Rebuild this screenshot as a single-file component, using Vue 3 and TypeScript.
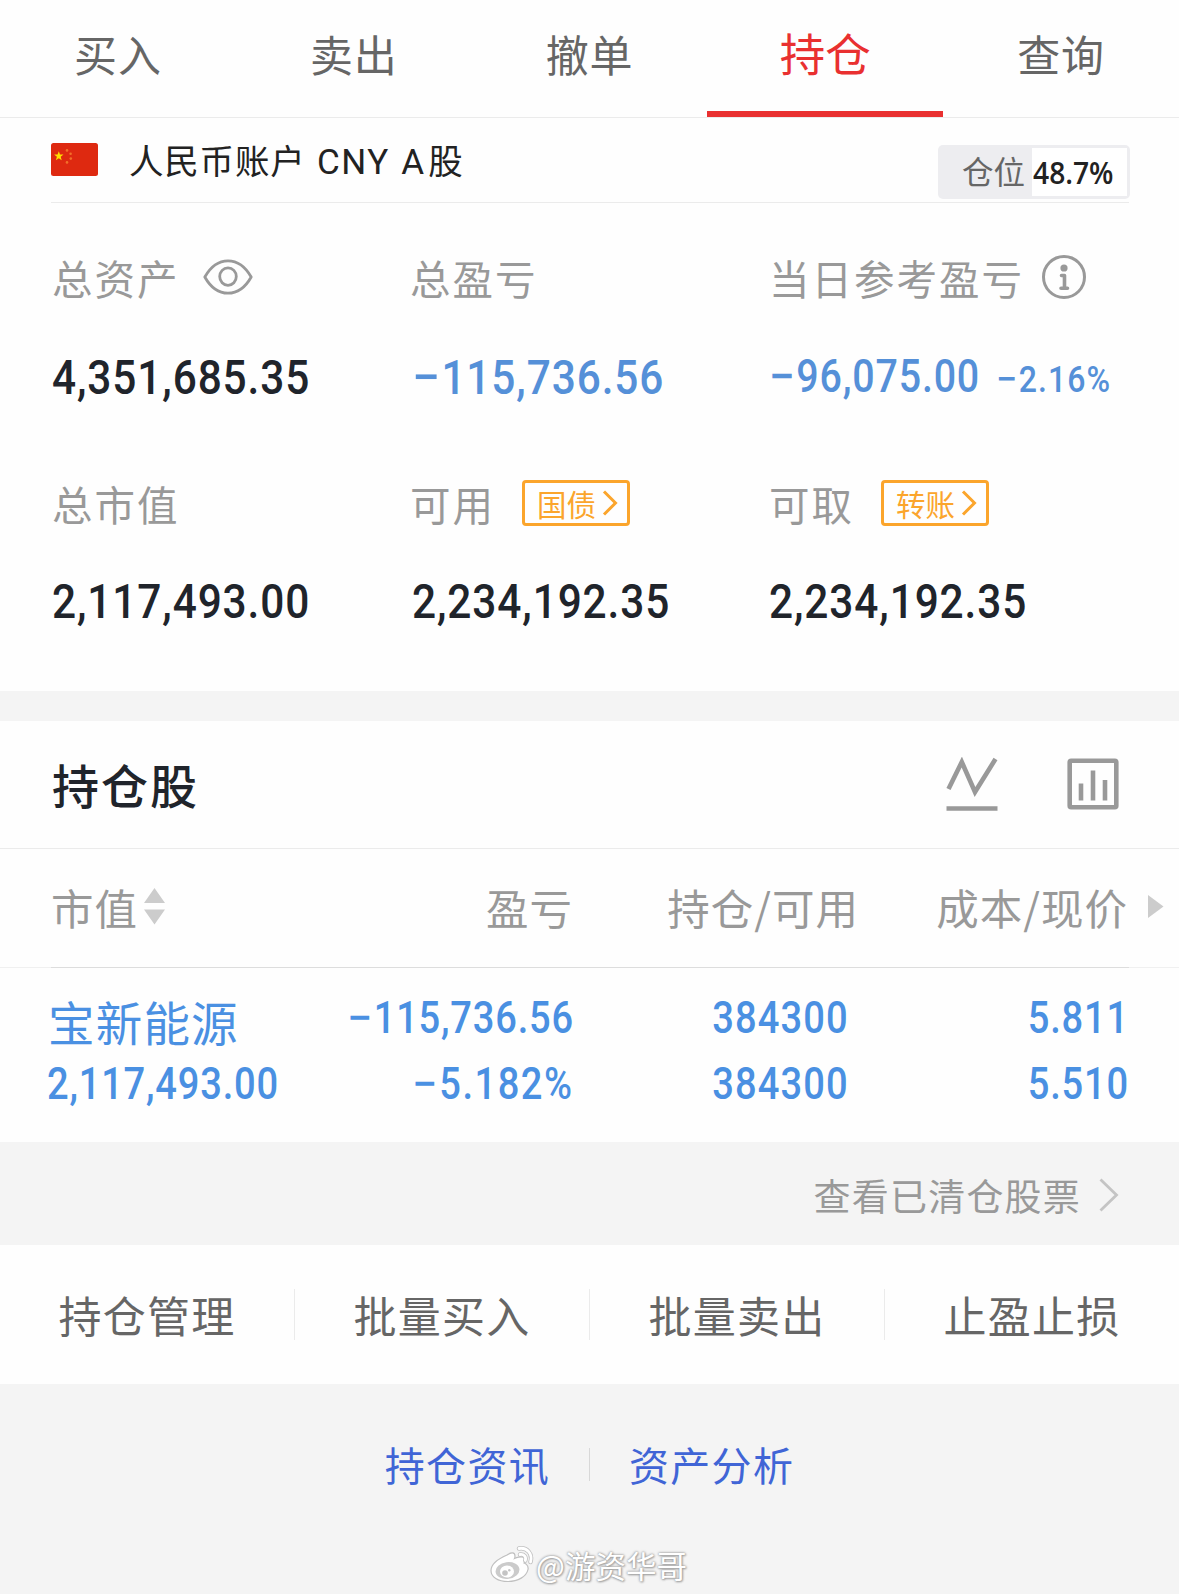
<script setup lang="ts">
interface Tab { name: string; active?: boolean }

const tabs: Tab[] = [
  { name: '买入' },
  { name: '卖出' },
  { name: '撤单' },
  { name: '持仓', active: true },
  { name: '查询' },
]
const actions: string[] = ['持仓管理', '批量买入', '批量卖出', '止盈止损']
</script>

<template>
  <div class="page">
    <nav class="tabs">
      <div v-for="t in tabs" :key="t.name" class="tab" :class="{ active: t.active }">
        <span>{{ t.name }}</span>
      </div>
    </nav>

    <section class="account">
      <div class="account-head">
        <svg class="flag" viewBox="0 0 47 33" width="47" height="33">
          <rect width="47" height="33" rx="2.5" fill="#de2910" />
          <path d="M7.8 8.2l1.2 3.3 3.5.1-2.8 2.2 1 3.4-2.9-2-2.9 2 1-3.4-2.8-2.2 3.5-.1z" fill="#ffde00" />
          <g fill="#f2702a">
            <circle cx="16" cy="7.4" r="1.3" /><circle cx="19.6" cy="10.8" r="1.3" />
            <circle cx="19.8" cy="15.6" r="1.3" /><circle cx="16" cy="19.4" r="1.3" />
          </g>
        </svg>
        <span class="account-name">人民币账户 <i class="latin">CNY</i> <i class="latin">A</i>股</span>
        <div class="ratio"><span class="ratio-key">仓位</span><span class="ratio-val"><b>48.7%</b></span></div>
      </div>

      <div class="stats">
        <div class="cell">
          <div class="label">总资产
            <svg class="eye" viewBox="0 0 50 36" width="50" height="36" fill="none" stroke="#999" stroke-width="2.8">
              <path d="M1.8 18C8 7 16 1.8 25 1.8S42 7 48.200 18C42 29 34 34.200 25 34.200S8 29 1.800 18z" stroke-linejoin="round" />
              <ellipse cx="25" cy="17.600" rx="8.300" ry="8.800" />
            </svg>
          </div>
          <div class="value"><span class="num big">4,351,685.35</span></div>
        </div>
        <div class="cell second">
          <div class="label">总盈亏</div>
          <div class="value blue"><span class="num big"><i class="neg">−</i>115,736.56</span></div>
        </div>
        <div class="cell">
          <div class="label">当日参考盈亏
            <svg class="info" viewBox="0 0 46 46" width="46" height="46" fill="none" stroke="#999">
              <circle cx="23" cy="23" r="20.500" stroke-width="3" />
              <circle cx="23" cy="14" r="3.600" fill="#999" stroke="none" />
              <path d="M20.500 21.500h3v12.500M20 34.200h6.500" stroke-width="3.600" stroke-linejoin="round" stroke-linecap="round" />
            </svg>
          </div>
          <div class="value blue day"><span class="num mid"><i class="neg">−</i>96,075.00</span><span class="num pct"><i class="neg">−</i>2.16%</span></div>
        </div>
        <div class="cell">
          <div class="label">总市值</div>
          <div class="value"><span class="num big">2,117,493.00</span></div>
        </div>
        <div class="cell second">
          <div class="label">可用
            <span class="link">国债
              <svg viewBox="0 0 16 26" width="16" height="26" fill="none" stroke="#fba52c" stroke-width="3"><path d="M2 1.500L13.500 13 2 24.500" /></svg>
            </span>
          </div>
          <div class="value"><span class="num big">2,234,192.35</span></div>
        </div>
        <div class="cell">
          <div class="label">可取
            <span class="link">转账
              <svg viewBox="0 0 16 26" width="16" height="26" fill="none" stroke="#fba52c" stroke-width="3"><path d="M2 1.500L13.500 13 2 24.500" /></svg>
            </span>
          </div>
          <div class="value"><span class="num big">2,234,192.35</span></div>
        </div>
      </div>
    </section>

    <section class="holdings">
      <header class="holdings-head">
        <h2>持仓股</h2>
        <svg class="trend" viewBox="0 0 52 54" width="52" height="54" fill="none" stroke="#999" stroke-width="4.600">
          <path d="M2.500 32L15.800 5 29 35 49.500 2M.5 51.500h51" />
        </svg>
        <svg class="bars" viewBox="0 0 52 52" width="52" height="52" fill="none" stroke="#999" stroke-width="4.600">
          <rect x="2.700" y="2.700" width="46.600" height="46.600" rx="1.500" />
          <path d="M14 25.500v17M26 12.500v30M38 22v20.500" />
        </svg>
      </header>

      <div class="grid thead">
        <div class="c1"><span>市值</span>
          <svg viewBox="0 0 21 37" width="21" height="37" fill="#ccc"><path d="M10.500 0L21 15H0zM0 21.500h21L10.500 36.500z" /></svg>
        </div>
        <div class="c2">盈亏</div>
        <div class="c3">持仓/可用</div>
        <div class="c4">成本/现价</div>
        <svg class="more" viewBox="0 0 16 23" width="16" height="23" fill="#ccc"><path d="M0 0l15.500 11.500L0 23z" /></svg>
      </div>

      <div class="grid row">
        <div class="c1"><span class="stock">宝新能源</span><span class="num">2,117,493.00</span></div>
        <div class="c2"><span class="num"><i class="neg">−</i>115,736.56</span><span class="num rate"><i class="neg">−</i>5.182%</span></div>
        <div class="c3"><span class="num">384300</span><span class="num">384300</span></div>
        <div class="c4"><span class="num">5.811</span><span class="num">5.510</span></div>
      </div>
    </section>

    <div class="cleared">
      <span>查看已清仓股票</span>
      <svg viewBox="0 0 20 34" width="20" height="34" fill="none" stroke="#c4c4c4" stroke-width="2.800"><path d="M1.500 1.500L17.500 17 1.500 32.500" /></svg>
    </div>

    <div class="actions">
      <div v-for="a in actions" :key="a" class="action"><span>{{ a }}</span></div>
    </div>

    <footer>
      <div class="links"><a>持仓资讯</a><i class="sep"></i><a>资产分析</a></div>
      <div class="mark">
        <svg viewBox="0 0 46 40" width="46" height="40">
          <path d="M19 10c4-3 8-3 8 1 0 1.500-.5 2.500-.5 2.500s8-3.500 10 0c1 2-.5 4.500-.5 4.500s5 1.500 4 6.500c-1.500 7-10 12-20 12S3 32 3 25.500 11 13.500 19 10z" fill="#fff" stroke="#c0c0c0" stroke-width="1.200" />
          <ellipse cx="19.500" cy="25.500" rx="12" ry="8.300" fill="#cbcbcb" transform="rotate(-8 19.500 25.500)" />
          <ellipse cx="19" cy="26.500" rx="7" ry="6" fill="#fff" />
          <circle cx="17" cy="28" r="2.800" fill="#c4c4c4" /><circle cx="21.300" cy="25.200" r="1.200" fill="#c4c4c4" />
          <g fill="none" stroke-linecap="round">
            <path d="M31 3.500c8-1.500 14 5.500 11.500 13.500M32 9.500c4-.7 6.500 2.500 5.300 6" stroke="#c0c0c0" stroke-width="4.400" />
            <path d="M31 3.500c8-1.500 14 5.500 11.500 13.500M32 9.500c4-.7 6.500 2.500 5.300 6" stroke="#fff" stroke-width="2.800" />
          </g>
        </svg>
        <span>@游资华哥</span>
      </div>
    </footer>
  </div>
</template>

<style>
body { margin: 0; background: #f4f4f4; }
</style>

<style scoped>
.page {
  width: 1179px;
  height: 1594px;
  overflow: hidden;
  display: flex;
  flex-direction: column;
  background: #fefefe;
  font-family: "Noto Sans CJK SC", sans-serif;
  color: #666;
}
.page > * { flex: none; box-sizing: border-box; }
svg { display: block; flex: none; }
i { font-style: normal; }

.tabs { display: flex; height: 118px; border-bottom: 1px solid #ebebeb; }
.tab {
  flex: 1;
  box-sizing: border-box;
  height: 117px;
  padding-top: 25px;
  line-height: 56px;
  text-align: center;
  font-size: 43px;
  letter-spacing: 0.8px;
}
.tab.active { color: #e93030; font-size: 45.5px; border-bottom: 6px solid #e93030; letter-spacing: 0; padding-top: 24px; }

.account { height: 573px; }
.account-head {
  display: flex;
  align-items: flex-start;
  height: 85px;
  box-sizing: border-box;
  margin: 0 50px 0 51px;
  padding-top: 25px;
  border-bottom: 1px solid #ebebeb;
}
.account-name {
  margin: -6px auto 0 31px;
  line-height: 44px;
  font-size: 34.500px;
  letter-spacing: 0.8px;
  word-spacing: 3px;
  color: #222;
  white-space: pre;
}
.latin { font-family: Roboto, sans-serif; font-size: 35px; letter-spacing: 1.500px; }
.latin + .latin { letter-spacing: 4px; }
.ratio {
  display: flex;
  box-sizing: border-box;
  width: 192px;
  height: 54px;
  margin: 2px -1px 0 0;
  padding: 3px;
  border-radius: 5px;
  background: #ededf0;
}
.ratio-key { width: 91px; text-indent: 21px; line-height: 44px; font-size: 31.500px; color: #666; }
.ratio-val { flex: 1; background: #fff; padding-left: 1px; font: 600 31px/48px "Open Sans", sans-serif; color: #222; }
.ratio-val b { display: inline-block; font-weight: inherit; transform: scaleX(0.91); transform-origin: left center; }

.stats { display: grid; grid-template-columns: 358px 359px 1fr; grid-template-rows: 226px 200px; padding: 44px 0 0 52px; }
.label {
  display: flex;
  align-items: center;
  height: 60px;
  font-size: 40.5px;
  letter-spacing: 2px;
  color: #999;
}
.eye { margin-left: 23px; }
.info { margin-left: 17px; }
.value { display: flex; align-items: center; height: 60px; margin-top: 40px; color: #20242b; }
.stats .cell:nth-child(n + 4) .value { margin-top: 38px; }
.second .value { padding-left: 2px; }
.value.blue { color: #5590d8; }
.num {
  display: inline-block;
  font-family: Roboto, sans-serif;
  font-weight: 500;
  white-space: nowrap;
  letter-spacing: 0.021em;
  transform: scaleX(0.865);
  transform-origin: left center;
}
.neg { display: inline-block; margin-right: 0.11em; transform: scaleX(1.18); transform-origin: left center; }
.big { font-size: 49px; }
.mid { font-size: 45.500px; }
.pct { font-size: 37px; margin-left: -17px; letter-spacing: 0.035em; }
.day { align-items: baseline; height: 56px; padding-top: 3px; }
.link {
  display: flex;
  align-items: center;
  box-sizing: border-box;
  width: 108px;
  height: 46px;
  margin-left: 27px;
  padding-left: 12px;
  border: 3px solid #fba52c;
  border-radius: 4px;
  font-size: 29.500px;
  letter-spacing: 0;
  color: #fba52c;
}
.link svg { margin-left: 6px; }

.holdings { height: 451px; border-top: 30px solid #f4f4f4; }
.holdings-head { display: flex; align-items: center; height: 127px; padding: 0 60px 0 52px; border-bottom: 1px solid #ebebeb; }
.holdings-head svg { margin-bottom: 1px; }
h2 { margin: -2px auto 0 0; font-size: 47px; font-weight: 500; letter-spacing: 2px; color: #20242b; }
.trend { margin-right: 69px; }

.grid { display: grid; grid-template-columns: 230px 290px 284px 271px 1fr; }
.thead {
  height: 120px;
  box-sizing: border-box;
  align-items: center;
  padding: 0 0 6px 52px;
  font-size: 42.500px;
  letter-spacing: 1px;
  color: #999;
  background:
    linear-gradient(#ddd, #ddd) 51px 118px / 1078px 1px no-repeat,
    linear-gradient(#f0f0f0, #f0f0f0) 0 118px / 100% 1px no-repeat;
}
.thead .c1 { display: flex; align-items: center; margin-left: -1px; }
.thead .c1 svg { margin-left: 6px; }
.thead .c2 { margin-right: -1px; }
.thead .c3 { margin-right: -3px; }
.thead .c4 { margin-right: -1px; }
.c2, .c3, .c4 { text-align: right; }
.more { margin-left: 21px; }
.row { padding: 16px 0 0 48px; color: #4a90e2; }
.row > div { display: flex; flex-direction: column; align-items: flex-end; }
.row > .c1 { align-items: flex-start; }
.row .num { font-size: 44px; line-height: 66px; transform-origin: right center; }
.row .c1 .num { margin-left: -1px; transform-origin: left center; }
.row .c2 { margin-right: -6px; }
.row .num.rate { letter-spacing: 0.04em; }
.row .c3 { margin-right: 3px; }
.row .c3 .num { letter-spacing: 0.029em; }
.row .c4 { margin-right: -6px; }
.stock { margin: 3px 0 -3px; font-size: 46.500px; line-height: 66px; letter-spacing: 1.200px; }

.cleared {
  display: flex;
  align-items: center;
  justify-content: flex-end;
  height: 103px;
  padding: 3px 60px 0 0;
  background: #f4f4f4;
  font-size: 37px;
  letter-spacing: 1.200px;
  color: #999;
}
.cleared svg { margin-left: 18px; }

.actions { display: flex; height: 139px; }
.action { display: flex; flex: 1; height: 51px; margin-top: 44px; align-items: center; justify-content: center; font-size: 43px; letter-spacing: 1.300px; }
.action span { margin: -1px 0 0 0; }
.action + .action { border-left: 1px solid #ebebeb; }

footer { flex: 1 !important; background: #f4f4f4; }
.links { display: flex; justify-content: center; align-items: center; padding-top: 50px; height: 60px; font-size: 40px; letter-spacing: 1.300px; color: #4065d6; }
.sep { width: 1px; height: 33px; margin: 0 39px; background: #d8d8d8; }
.mark { display: flex; align-items: center; justify-content: center; margin: 50px 4px 0 0; height: 42px; font-size: 30.500px; color: #fff; }
.mark span { text-shadow: 0 0 2px #999, 0 0 3px #aaa, 1px 1px 2px #aaa; margin-left: 2px; }
</style>
